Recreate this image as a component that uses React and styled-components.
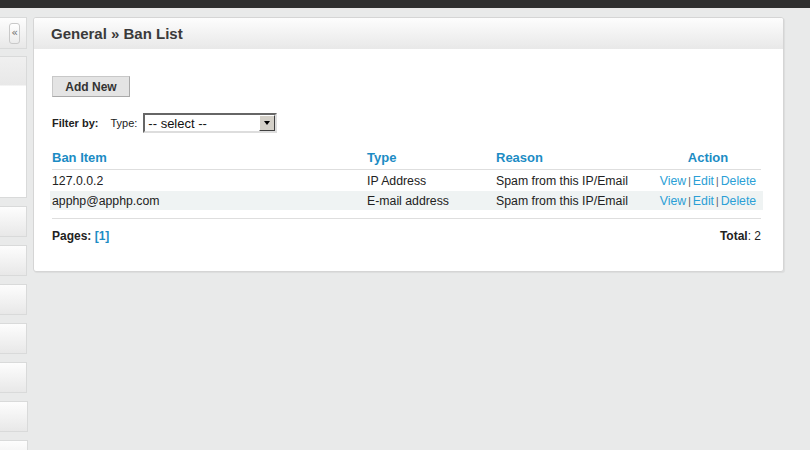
import React from "react";
import styled, { createGlobalStyle } from "styled-components";

const GlobalStyle = createGlobalStyle`
  html, body {
    margin: 0;
    padding: 0;
    background: #e9eaea;
    font-family: "Liberation Sans", Arial, sans-serif;
    color: #222;
  }
`;

const Page = styled.div`
  width: 810px;
  height: 450px;
  overflow: hidden;
  display: flex;
  flex-direction: column;
  background: #e9eaea;
`;

const TopBar = styled.div`
  height: 8px;
  background: #303030;
  flex-shrink: 0;
`;

const Content = styled.div`
  display: flex;
  gap: 6px;
  padding-top: 9px;
  flex: 1;
`;

const Sidebar = styled.div`
  width: 27px;
  flex-shrink: 0;
  display: flex;
  flex-direction: column;
  gap: 8px;
`;

const SideBox = styled.div`
  box-sizing: border-box;
  width: ${({ $wide }) => ($wide ? "28px" : "27px")};
  height: ${({ $h }) => $h}px;
  border: 1px solid #d9dada;
  border-left: none;
  background: ${({ $plain }) =>
    $plain
      ? "linear-gradient(#f0f0f0, #e8e8e8 28px, #fff 29px, #fff)"
      : "linear-gradient(#fdfdfd, #e8e8e8)"};
  display: flex;
  align-items: center;
  padding-left: 9px;
  flex-shrink: 0;
`;

const Collapse = styled.button`
  box-sizing: border-box;
  width: 11px;
  height: 21px;
  padding: 0;
  border: 1px solid #c9c9c9;
  border-radius: 3px;
  background: linear-gradient(#ffffff, #ececec);
  color: #6f6f6f;
  font-family: "DejaVu Sans", sans-serif;
  font-size: 11px;
  line-height: 18px;
  text-align: center;
  cursor: pointer;
`;

const Main = styled.div`
  flex: 1;
  padding-right: 26px;
`;

const Panel = styled.div`
  box-sizing: border-box;
  height: 255px;
  border: 1px solid #d5d5d5;
  border-radius: 3px;
  background: #fff;
  box-shadow: 1px 1px 1px rgba(0, 0, 0, 0.06);
  overflow: hidden;
`;

const PanelHeader = styled.div`
  height: 31px;
  background: linear-gradient(#fdfdfd, #e8e8e8);
  display: flex;
  align-items: center;
  padding-left: 17px;
`;

const Title = styled.h2`
  margin: 0;
  font-size: 15px;
  font-weight: bold;
  color: #3a3a3a;
`;

const PanelBody = styled.div`
  padding: 27px 22px 0 18px;
`;

const Button = styled.button`
  box-sizing: border-box;
  width: 78px;
  height: 21px;
  padding: 0;
  border: 1px solid #a9a9a9;
  border-top-color: #c8c8c8;
  border-left-color: #c8c8c8;
  background: #e4e4e4;
  font-family: "Liberation Sans", Arial, sans-serif;
  font-size: 12px;
  font-weight: bold;
  color: #333;
  cursor: pointer;
`;

const FilterRow = styled.div`
  margin-top: 16px;
  display: flex;
  align-items: center;
  height: 20px;
  font-size: 11px;
  color: #222;
`;

const FilterLabel = styled.span`
  font-weight: bold;
  margin-right: 12px;
`;

const TypeLabel = styled.span`
  margin-right: 6px;
`;

const SelectBox = styled.div`
  box-sizing: border-box;
  width: 134px;
  height: 20px;
  display: flex;
  border: 2px solid #666;
  border-right-color: #ddd;
  border-bottom-color: #ddd;
  background: #fff;
`;

const Select = styled.select`
  flex: 1;
  min-width: 0;
  appearance: none;
  border: none;
  outline: none;
  background: transparent;
  padding: 0 0 0 3px;
  font-family: "Liberation Sans", Arial, sans-serif;
  font-size: 13px;
  color: #111;
`;

const Arrow = styled.div`
  box-sizing: border-box;
  width: 16px;
  background: #d4d0c8;
  border: 1px solid;
  border-color: #fff #404040 #404040 #fff;
  display: flex;
  align-items: center;
  justify-content: center;
  &::after {
    content: "";
    border-left: 3.5px solid transparent;
    border-right: 3.5px solid transparent;
    border-top: 4px solid #000;
  }
`;

const Row = styled.div`
  display: grid;
  grid-template-columns: 315px 129px 1fr 106px;
  align-items: center;
  margin: 0 -2px;
  padding: 0 2px;
  height: ${({ $h }) => $h || 20}px;
  background: ${({ $alt }) => ($alt ? "#eff3f3" : "transparent")};
  font-size: 12.3px;
  color: #222;
`;

const HeadRow = styled(Row)`
  margin: 13px 0 0;
  padding: 0;
  height: 23px;
  border-bottom: 1px solid #dedede;
  font-size: 13px;
  font-weight: bold;
  color: #1c8cc4;
`;

const Cell = styled.div`
  text-align: ${({ $center }) => ($center ? "center" : "left")};
  white-space: nowrap;
`;

const Link = styled.a`
  color: #2b9fd6;
  text-decoration: none;
  cursor: pointer;
`;

const Sep = styled.span`
  color: #555;
  font-size: 10px;
  margin: 0 2px;
`;

const Footer = styled.div`
  margin-top: 8px;
  border-top: 1px solid #dedede;
  padding-top: 9px;
  display: flex;
  justify-content: space-between;
  font-size: 12px;
  line-height: 16px;
  color: #222;
`;

const Bold = styled.b`
  font-weight: bold;
`;

const PageLink = styled.a`
  color: #1c8cc4;
  font-weight: bold;
  text-decoration: none;
`;

const rows = [
  { item: "127.0.0.2", type: "IP Address", reason: "Spam from this IP/Email" },
  { item: "apphp@apphp.com", type: "E-mail address", reason: "Spam from this IP/Email" },
];

const sideBoxes = [31, 31, 31, 31, 31, 31, 31];

export default function App() {
  return (
    <Page>
      <GlobalStyle />
      <TopBar />
      <Content>
        <Sidebar>
          <SideBox $h={32}>
            <Collapse>«</Collapse>
          </SideBox>
          <SideBox $h={142} $plain style={{ marginTop: -1 }} />
          {sideBoxes.map((h, i) => (
            <SideBox key={i} $h={h} $wide={i >= 5} />
          ))}
        </Sidebar>
        <Main>
          <Panel>
            <PanelHeader>
              <Title>General » Ban List</Title>
            </PanelHeader>
            <PanelBody>
              <Button>Add New</Button>
              <FilterRow>
                <FilterLabel>Filter by:</FilterLabel>
                <TypeLabel>Type:</TypeLabel>
                <SelectBox>
                  <Select defaultValue="">
                    <option value="">-- select --</option>
                    <option value="ip">IP Address</option>
                    <option value="email">E-mail address</option>
                  </Select>
                  <Arrow />
                </SelectBox>
              </FilterRow>
              <HeadRow>
                <Cell>Ban Item</Cell>
                <Cell>Type</Cell>
                <Cell>Reason</Cell>
                <Cell $center>Action</Cell>
              </HeadRow>
              {rows.map((r, i) => (
                <Row key={r.item} $alt={i % 2 === 1} $h={i === 0 ? 21 : 19}>
                  <Cell>{r.item}</Cell>
                  <Cell>{r.type}</Cell>
                  <Cell>{r.reason}</Cell>
                  <Cell $center>
                    <Link>View</Link>
                    <Sep>|</Sep>
                    <Link>Edit</Link>
                    <Sep>|</Sep>
                    <Link>Delete</Link>
                  </Cell>
                </Row>
              ))}
              <Footer>
                <span>
                  <Bold>Pages:</Bold> <PageLink>[1]</PageLink>
                </span>
                <span>
                  <Bold>Total</Bold>: 2
                </span>
              </Footer>
            </PanelBody>
          </Panel>
        </Main>
      </Content>
    </Page>
  );
}
